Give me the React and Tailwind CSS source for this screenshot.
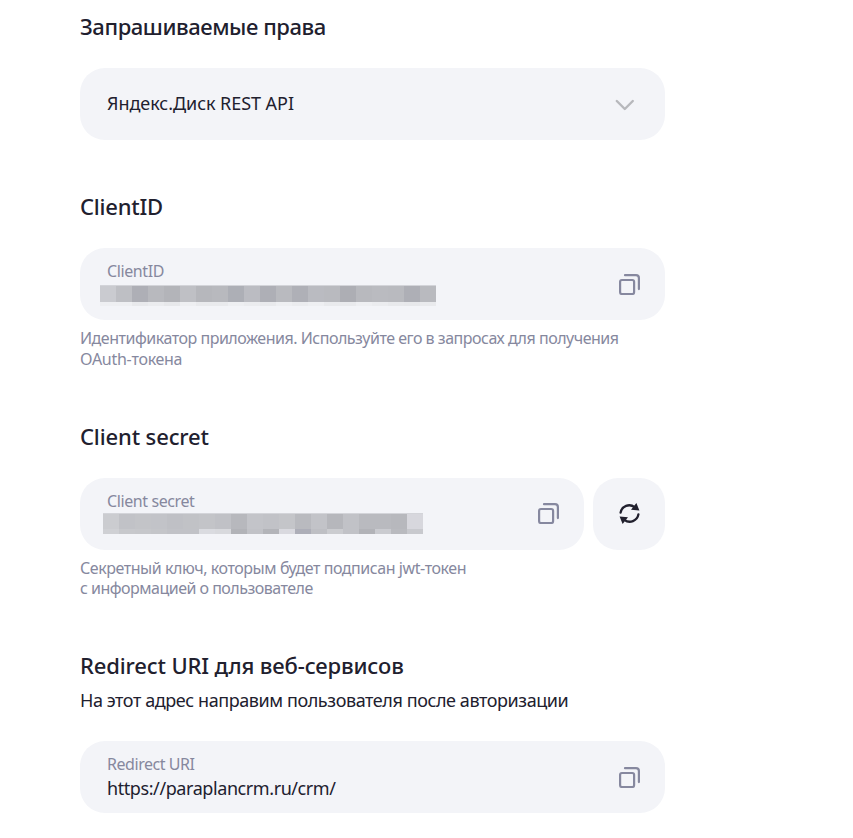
const CopyIcon = () => (
    <svg width="21" height="21" viewBox="0 0 21 21" fill="none" stroke="#86889f" strokeWidth="2.2" strokeLinecap="round">
        <rect x="1.1" y="6" width="14" height="14" rx="1.8" />
        <path d="M6 1.2h11a2.9 2.9 0 0 1 2.9 2.9v11" />
    </svg>
);

const ChevronIcon = () => (
    <svg width="20" height="12" viewBox="0 0 20 12" fill="none" stroke="#b7b8bc" strokeWidth="2.4" strokeLinecap="round" strokeLinejoin="round">
        <path d="M1.8 2l8 8 8-8" />
    </svg>
);

const RefreshIcon = () => (
    <svg width="21" height="21" viewBox="0 0 21 21" fill="none">
        <path d="M1.6 9.6A8.7 8.7 0 0 1 15.6 4.2M19.4 11.4A8.7 8.7 0 0 1 5.4 16.8" stroke="#21202e" strokeWidth="2.3" strokeLinecap="round" />
        <path d="M17.4 0L20.4 7.5L12 6.8ZM3.6 21L.6 13.5L9 14.2Z" fill="#21202e" />
    </svg>
);

// Hidden values are covered with rows of 16px grey tiles
const clientIdTiles = [
    ["bg-[#cacbd0]", "bg-[#bebfc4]", "bg-[#aeafb6]", "bg-[#b8b9be]", "bg-[#b3b4b9]", "bg-[#bfc0c5]", "bg-[#b6b7bc]", "bg-[#b8b9be]", "bg-[#adafb6]", "bg-[#bbbcc2]", "bg-[#aeafb6]", "bg-[#b9babf]", "bg-[#afb0b7]", "bg-[#babbc1]", "bg-[#b9babf]", "bg-[#adaeb4]", "bg-[#b8b9be]", "bg-[#babbc0]", "bg-[#b9babf]", "bg-[#aeafb6]", "bg-[#b9babf]"],
    ["bg-[#eeeff2]", "bg-[#eeeff2]", "bg-[#e8e9ec]", "bg-[#ebecef]", "bg-[#e7e8eb]", "bg-[#eeeff2]", "bg-[#e9eaed]", "bg-[#e9eaed]", "bg-[#eeeff2]", "bg-[#ebecef]", "bg-[#e9eaed]", "bg-[#eeeff2]", "bg-[#ebecef]", "bg-[#eeeff2]", "bg-[#e9eaed]", "bg-[#e9eaed]", "bg-[#eeeff2]", "bg-[#ebecef]", "bg-[#e8e9ec]", "bg-[#e7e8eb]", "bg-[#e9eaed]"],
];

const clientSecretTiles = [
    ["bg-[#cbccd0]", "bg-[#c1c2c7]", "bg-[#c3c4c8]", "bg-[#c2c3c8]", "bg-[#bfc0c5]", "bg-[#c1c2c6]", "bg-[#c3c4c8]", "bg-[#c0c1c6]", "bg-[#b7b8bd]", "bg-[#c3c4c9]", "bg-[#c1c2c7]", "bg-[#c4c5c9]", "bg-[#b9babf]", "bg-[#c2c3c8]", "bg-[#b6b7bc]", "bg-[#c1c2c7]", "bg-[#b9babf]", "bg-[#b9babf]", "bg-[#b7b8bd]", "bg-[#d7d7dd]"],
    ["bg-[#cfd0d4]", "bg-[#c7c8cc]", "bg-[#c6c7cb]", "bg-[#c4c5c9]", "bg-[#c1c2c7]", "bg-[#c1c2c7]", "bg-[#dadbe0]", "bg-[#d8d9dd]", "bg-[#b2b3b8]", "bg-[#c1c2c7]", "bg-[#b3b4b9]", "bg-[#d9d9df]", "bg-[#adaeb8]", "bg-[#bebfc4]", "bg-[#cbccd0]", "bg-[#c1c2c7]", "bg-[#b2b3b8]", "bg-[#cacbd0]", "bg-[#b9babf]", "bg-[#c8c9ce]"],
];

const Tiles = ({ rows, topClass, bottomClass }) => (
    <div>
        <div className="flex">
            {rows[0].map((color, index) => (
                <div key={index} className={`w-4 ${topClass} ${color}`} />
            ))}
        </div>
        <div className="flex">
            {rows[1].map((color, index) => (
                <div key={index} className={`w-4 ${bottomClass} ${color}`} />
            ))}
        </div>
    </div>
);

const Heading = ({ children, className = "" }) => (
    <h2 className={`text-[22px] leading-8 font-medium whitespace-nowrap ${className}`}>{children}</h2>
);

const App = () => {
    return (
        <div className="min-h-screen bg-white pl-20 pt-2.5 text-[#21202e] font-['Noto_Sans',sans-serif]">
            {/* Permissions */}
            <section className="w-[585px]">
                <Heading className="tracking-[-0.43px]">Запрашиваемые права</Heading>
                <div className="mt-[26px] h-[72px] bg-[#f3f4f8] rounded-[25px] flex items-center justify-between pl-[27px] pr-[30px]">
                    <p className="pb-0.5 text-lg leading-6 tracking-[-0.05px]">Яндекс.Диск REST API</p>
                    <div className="pt-0.5">
                        <ChevronIcon />
                    </div>
                </div>
            </section>

            {/* Client ID */}
            <section className="w-[585px] mt-[50px]">
                <Heading className="tracking-[-0.2px]">ClientID</Heading>
                <div className="mt-[26px] h-[72px] bg-[#f3f4f8] rounded-[25px] flex items-center justify-between pl-5 pr-[25px]">
                    <div className="self-start pt-3">
                        <p className="pl-[7px] h-[25px] text-base leading-[22px] text-[#86889e] tracking-[-0.4px]">ClientID</p>
                        <Tiles rows={clientIdTiles} topClass="h-[17px] border-t border-[#d3d4d9]" bottomClass="h-1" />
                    </div>
                    <CopyIcon />
                </div>
                <div className="mt-2 text-base leading-[21px] text-[#86889e] whitespace-nowrap">
                    <p className="tracking-[-0.48px]">Идентификатор приложения. Используйте его в запросах для получения</p>
                    <p className="tracking-[-0.28px]">OAuth-токена</p>
                </div>
            </section>

            {/* Client secret */}
            <section className="w-[585px] mt-[50px]">
                <Heading className="tracking-[-0.12px]">Client secret</Heading>
                <div className="mt-[26px] flex gap-[9px]">
                    <div className="h-[72px] grow bg-[#f3f4f8] rounded-[25px] flex items-center justify-between pl-[23px] pr-[25px]">
                        <div className="self-start pt-3">
                            <p className="pl-1 h-[23px] text-base leading-[22px] text-[#86889e] tracking-[-0.4px]">Client secret</p>
                            <Tiles rows={clientSecretTiles} topClass="h-4 border-t border-[#d3d4d9]" bottomClass="h-[5px]" />
                        </div>
                        <div className="pb-px">
                            <CopyIcon />
                        </div>
                    </div>
                    <button className="size-[72px] pb-px bg-[#f3f4f8] rounded-[25px] flex items-center justify-center">
                        <RefreshIcon />
                    </button>
                </div>
                <div className="mt-2 text-base leading-5 text-[#86889e] whitespace-nowrap">
                    <p className="tracking-[-0.44px]">Секретный ключ, которым будет подписан jwt-токен</p>
                    <p className="tracking-[-0.51px]">с информацией о пользователе</p>
                </div>
            </section>

            {/* Redirect URI */}
            <section className="w-[585px] mt-[51px]">
                <Heading className="tracking-[-0.13px]">Redirect URI для веб-сервисов</Heading>
                <p className="mt-[7px] text-lg leading-6 whitespace-nowrap tracking-[-0.42px]">На этот адрес направим пользователя после авторизации</p>
                <div className="mt-[29px] h-[72px] bg-[#f3f4f8] rounded-[25px] flex items-center justify-between pl-[27px] pr-[25px]">
                    <div className="self-start pt-3">
                        <p className="text-base leading-[22px] text-[#86889e] tracking-[-0.45px]">Redirect URI</p>
                        <p className="mt-px text-lg leading-6 tracking-[-0.42px]">https://paraplancrm.ru/crm/</p>
                    </div>
                    <CopyIcon />
                </div>
            </section>
        </div>
    );
};

export default App;
